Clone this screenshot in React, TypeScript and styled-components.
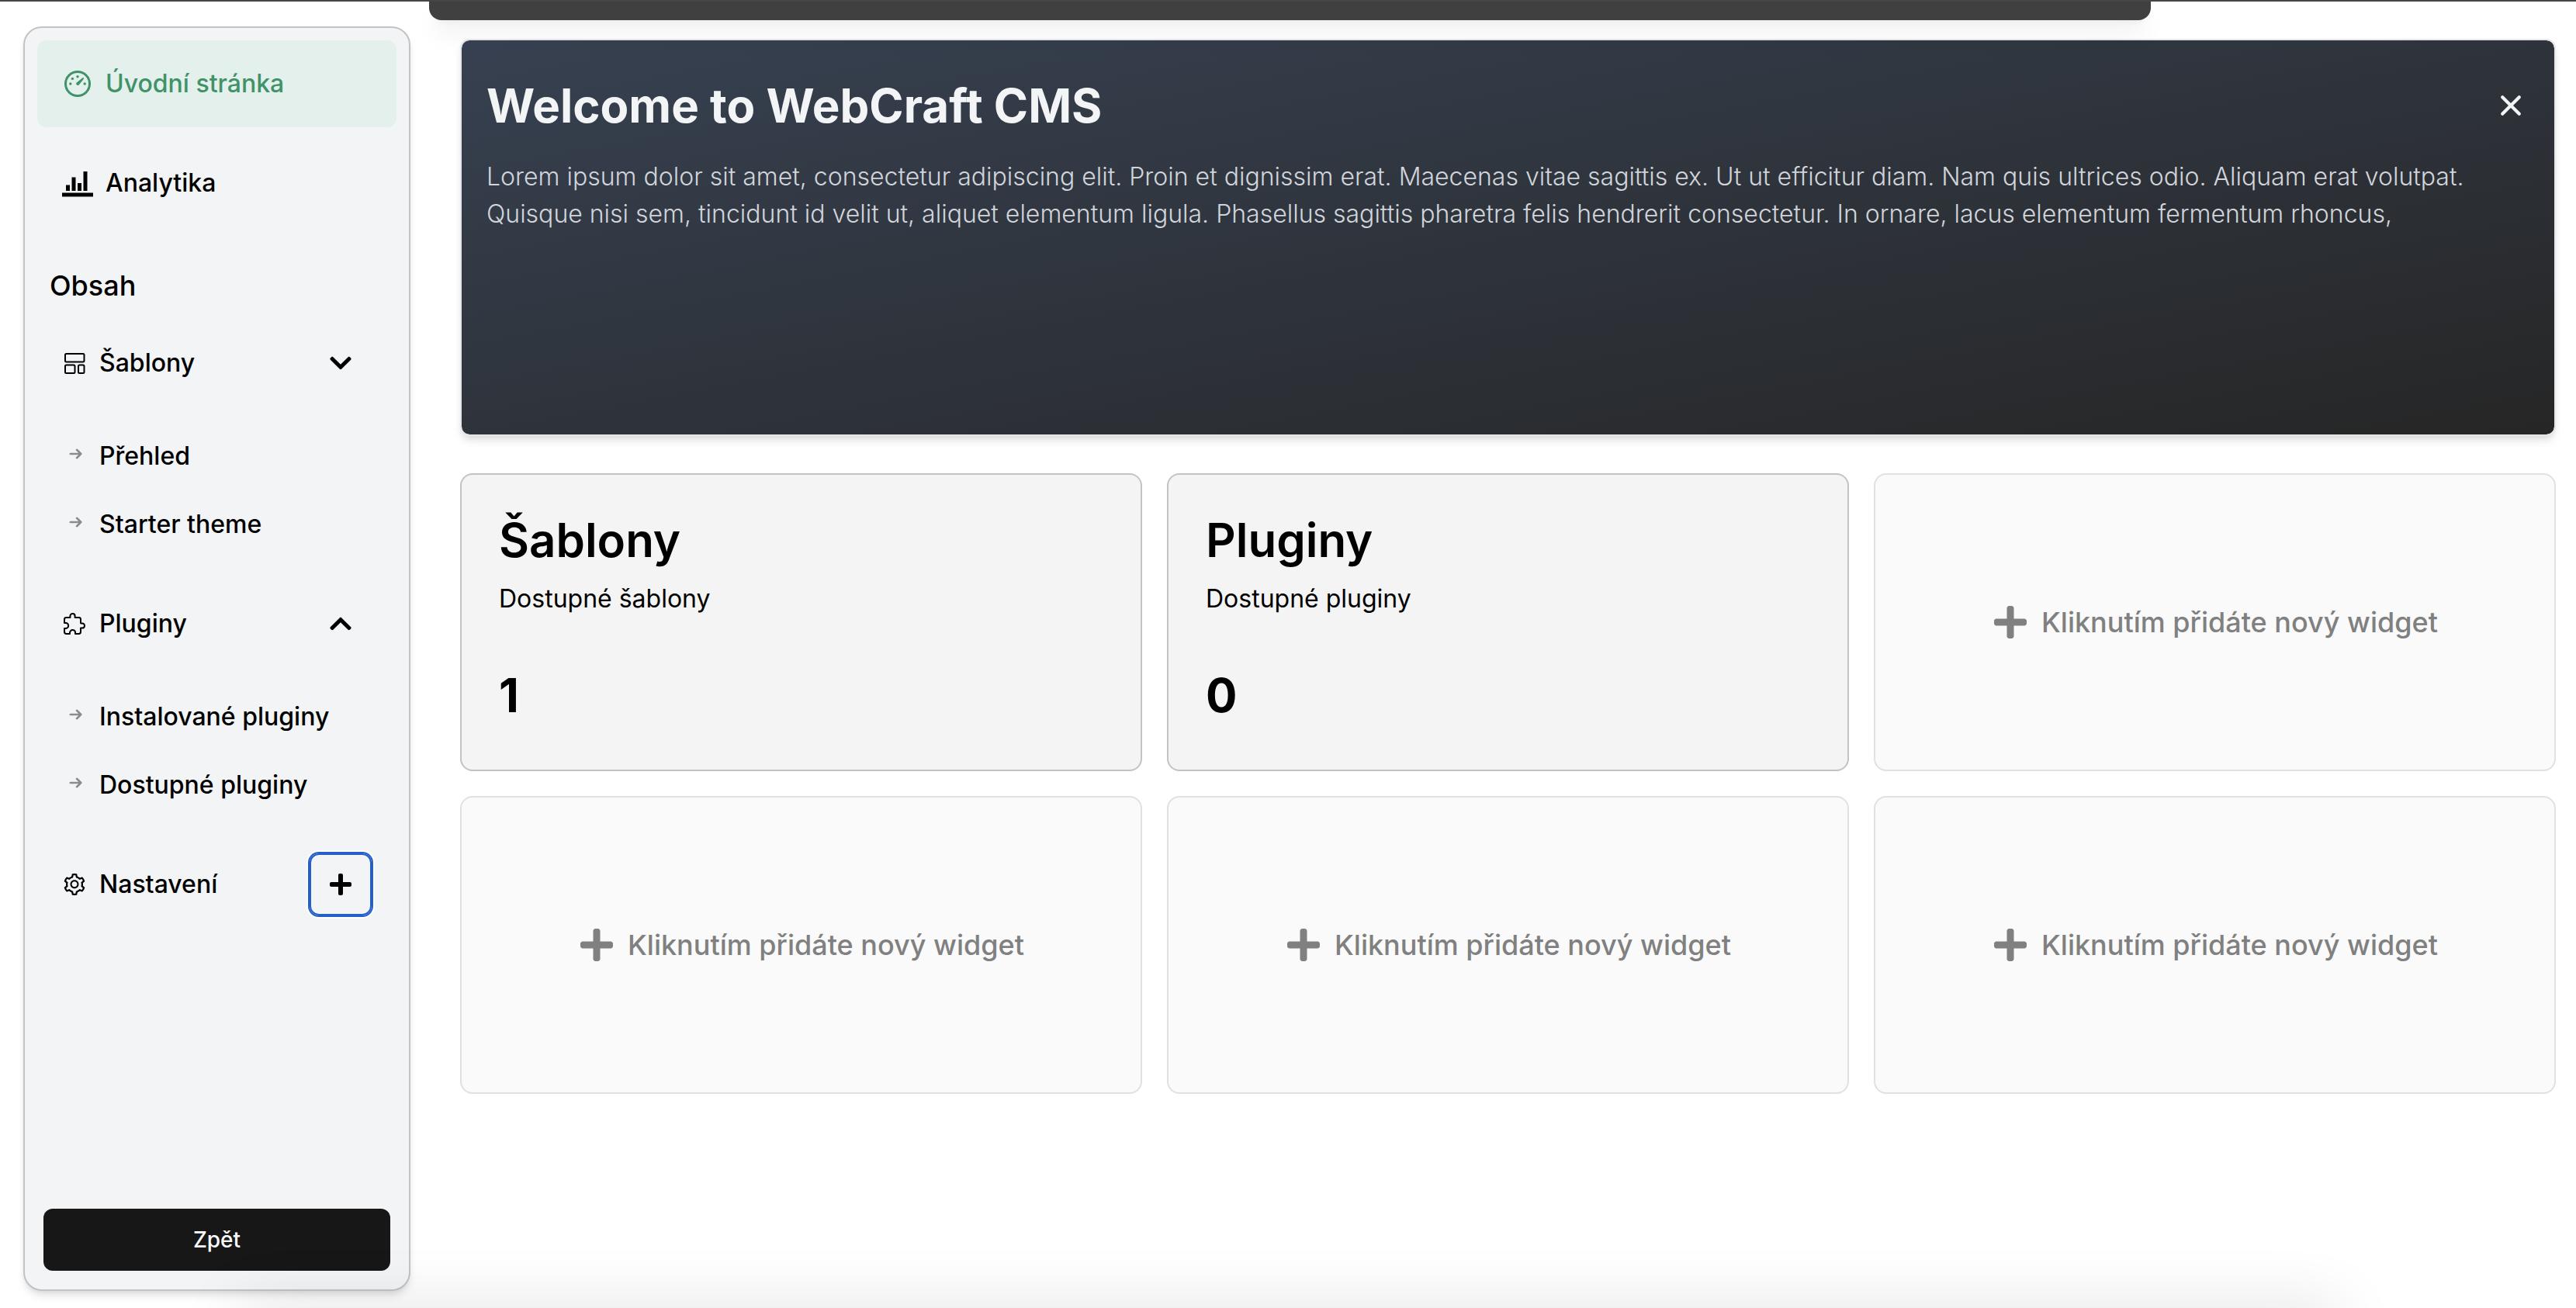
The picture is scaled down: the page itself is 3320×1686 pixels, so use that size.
import React from 'react';
import styled, { createGlobalStyle } from 'styled-components';
import { AiOutlineSetting } from 'react-icons/ai';
import { ImStatsBars } from 'react-icons/im';
import { FaChevronDown, FaChevronUp, FaPlus } from 'react-icons/fa';
import { IoExtensionPuzzleOutline } from 'react-icons/io5';

const GlobalStyle = createGlobalStyle`
  *, *::before, *::after { box-sizing: border-box; }
  body { margin: 0; background: #fff; color: #000; font-family: Inter, "Liberation Sans", sans-serif; font-size: 32px; line-height: 48px; }
  h1, h2, h3, p, ul { margin: 0; padding: 0; }
  ul { list-style: none; }
  a { color: inherit; text-decoration: none; }
  button { font: inherit; color: inherit; background: none; border: 0; padding: 0; cursor: pointer; }
  svg { display: block; flex: none; }
`;

const Page = styled.div`
  position: relative;
  display: flex;
  min-height: 100vh;
  overflow: hidden;
  border-top: 2px solid #464646;
`;

const TopPanel = styled.div`
  position: absolute;
  top: 0;
  left: 553px;
  right: 548px;
  height: 24px;
  border-radius: 0 0 16px 16px;
  background: #404040;
  box-shadow: 0 20px 30px -6px rgba(0, 0, 0, 0.1), 0 8px 12px -8px rgba(0, 0, 0, 0.1);
`;

const BottomShade = styled.div`
  position: absolute;
  top: 100%;
  left: 308px;
  right: 308px;
  height: 40px;
  box-shadow: 0 0 80px 0 rgba(0, 0, 0, 0.15);
`;

const Sidebar = styled.aside`
  display: flex;
  flex-direction: column;
  flex: none;
  width: 499px;
  margin: 32px 64px 22px 30px;
  padding: 16px;
  border: 2px solid #c1c3c5;
  border-radius: 24px;
  background: #f3f4f6;
  box-shadow: 0 8px 12px -2px rgba(0, 0, 0, 0.1), 0 4px 8px -4px rgba(0, 0, 0, 0.1);
  font-weight: 500;
`;

const MainNav = styled.nav`
  display: flex;
  flex-direction: column;
  gap: 16px;
`;

const MainLink = styled.a<{ $active?: boolean }>`
  display: flex;
  align-items: center;
  gap: 16px;
  padding: 32px;
  border-radius: 12px;
  background: ${(p) => (p.$active ? '#e4f0ec' : 'transparent')};
  color: ${(p) => (p.$active ? '#409268' : '#000')};
`;

const SectionTitle = styled.h2`
  padding: 52px 16px 20px;
  font-size: 36px;
  line-height: 48px;
  font-weight: 500;
`;

const Group = styled.section`
  padding: 0 32px;
  margin-bottom: 8px;
`;

const GroupHead = styled.div`
  display: flex;
  align-items: center;
  gap: 16px;
  height: 112px;
`;

const GroupLink = styled.a`
  flex: 1;
`;

const ToggleButton = styled.button<{ $focused?: boolean }>`
  display: flex;
  align-items: center;
  justify-content: center;
  width: 80px;
  height: 80px;
  border-radius: 12px;
  box-shadow: ${(p) => (p.$focused ? 'inset 0 0 0 2px #265fc9, 0 0 0 2px #265fc9, 0 0 0 4px #fff' : 'none')};
`;

const SubList = styled.ul`
  display: flex;
  flex-direction: column;
  padding: 20px 0;
`;

const SubLink = styled.a`
  display: flex;
  align-items: center;
  gap: 16px;
  height: 88px;
  svg { color: #8c8c8c; margin-bottom: 6px; }
`;

const BackButton = styled.button`
  margin: auto 8px 8px;
  height: 80px;
  border-radius: 12px;
  background: #171717;
  color: #fafafa;
  font-size: 28px;
  font-weight: 500;
`;

const Main = styled.main`
  flex: 1;
  min-width: 0;
  display: flex;
  flex-direction: column;
  gap: 48px;
  padding: 48px 26px 48px 0;
`;

const Banner = styled.section`
  min-height: 512px;
  padding: 48px 32px;
  border: 2px solid #e5e7eb;
  border-radius: 12px;
  background: linear-gradient(to bottom right, #374151, #262626) padding-box;
  box-shadow: 0 8px 12px -2px rgba(0, 0, 0, 0.1), 0 4px 8px -4px rgba(0, 0, 0, 0.1);
`;

const BannerHead = styled.div`
  display: flex;
  align-items: center;
  justify-content: space-between;
  color: #f3f4f6;
`;

const BannerTitle = styled.h1`
  font-size: 60px;
  line-height: 72px;
  font-weight: 700;
`;

const CloseButton = styled.button`
  padding: 8px;
`;

const BannerText = styled.p`
  padding-top: 32px;
  color: #d1d5db;
  font-weight: 300;
`;

const WidgetGrid = styled.div`
  display: grid;
  grid-template-columns: repeat(3, minmax(0, 1fr));
  grid-auto-rows: 384px;
  gap: 32px;
`;

const StatCard = styled.article`
  padding: 48px;
  border: 2px solid #c3c3c3;
  border-radius: 16px;
  background: #f4f4f4;
`;

const StatTitle = styled.h3`
  padding-bottom: 16px;
  font-size: 60px;
  line-height: 72px;
  font-weight: 600;
`;

const StatValue = styled.p`
  padding-top: 64px;
  font-size: 60px;
  line-height: 72px;
  font-weight: 700;
`;

const AddWidget = styled.button`
  && {
    display: flex;
    align-items: center;
    justify-content: center;
    gap: 16px;
    border: 2px solid #e1e1e1;
    border-radius: 16px;
    background: #fafafa;
    color: #808080;
    font-size: 36px;
    font-weight: 500;
  }
`;

const GaugeIcon = () => (
  <svg width="40" height="40" viewBox="0 0 40 40" fill="currentColor" aria-hidden="true">
    <circle cx="20" cy="20" r="15.5" fill="none" stroke="currentColor" strokeWidth="3" />
    <circle cx="10.8" cy="20" r="1.7" />
    <circle cx="13.4" cy="13.4" r="1.7" />
    <circle cx="20" cy="10.8" r="1.7" />
    <circle cx="29.2" cy="20" r="1.7" />
    <path d="M26.2 12.4 18.4 18.7a2.2 2.2 0 0 0 3 3L27.8 13.9a1.1 1.1 0 0 0-1.6-1.5z" />
  </svg>
);

const TemplateIcon = () => (
  <svg width="32" height="32" viewBox="0 0 32 32" fill="none" stroke="currentColor" strokeWidth="2" aria-hidden="true">
    <rect x="4" y="4" width="24.5" height="10.5" rx="1.5" />
    <rect x="4" y="18.5" width="12.5" height="10.5" rx="1.5" />
    <rect x="21" y="18.5" width="7.5" height="10.5" rx="1.5" />
  </svg>
);

const ArrowIcon = () => (
  <svg width="32" height="32" viewBox="0 0 32 32" fill="none" stroke="currentColor" strokeWidth="2.6" strokeLinecap="round" strokeLinejoin="round" aria-hidden="true">
    <path d="M10.8 16H24M19 10.8 24.3 16 19 21.2" />
  </svg>
);

const CloseIcon = () => (
  <svg width="32" height="32" viewBox="0 0 32 32" fill="none" stroke="currentColor" strokeWidth="4.2" strokeLinecap="round" aria-hidden="true">
    <path d="M5.2 5.2 26.8 26.8M26.8 5.2 5.2 26.8" />
  </svg>
);

const groups = [
  { label: 'Šablony', icon: <TemplateIcon />, toggle: <FaChevronDown size={32} />, items: ['Přehled', 'Starter theme'] },
  { label: 'Pluginy', icon: <IoExtensionPuzzleOutline size={32} />, toggle: <FaChevronUp size={32} />, items: ['Instalované pluginy', 'Dostupné pluginy'] },
  { label: 'Nastavení', icon: <AiOutlineSetting size={32} />, toggle: <FaPlus size={32} />, items: [], focused: true },
];

const stats = [
  { title: 'Šablony', text: 'Dostupné šablony', value: 1 },
  { title: 'Pluginy', text: 'Dostupné pluginy', value: 0 },
];

export default function App() {
  return (
    <Page>
      <GlobalStyle />
      <Sidebar>
        <MainNav>
          <MainLink href="#uvod" $active><GaugeIcon />Úvodní stránka</MainLink>
          <MainLink href="#analytika"><ImStatsBars size={40} />Analytika</MainLink>
        </MainNav>
        <SectionTitle>Obsah</SectionTitle>
        {groups.map((g) => (
          <Group key={g.label}>
            <GroupHead>
              {g.icon}
              <GroupLink href="#sekce">{g.label}</GroupLink>
              <ToggleButton type="button" aria-label={g.label} $focused={g.focused}>{g.toggle}</ToggleButton>
            </GroupHead>
            {g.items.length > 0 && (
              <SubList>
                {g.items.map((item) => (
                  <li key={item}>
                    <SubLink href="#polozka"><ArrowIcon />{item}</SubLink>
                  </li>
                ))}
              </SubList>
            )}
          </Group>
        ))}
        <BackButton type="button">Zpět</BackButton>
      </Sidebar>
      <TopPanel />
      <Main>
        <Banner>
          <BannerHead>
            <BannerTitle>Welcome to WebCraft CMS</BannerTitle>
            <CloseButton type="button" aria-label="Zavřít"><CloseIcon /></CloseButton>
          </BannerHead>
          <BannerText>
            Lorem ipsum dolor sit amet, consectetur adipiscing elit. Proin et dignissim erat. Maecenas vitae sagittis ex. Ut ut efficitur diam. Nam quis ultrices odio. Aliquam erat volutpat. Quisque nisi sem, tincidunt id velit ut, aliquet elementum ligula. Phasellus sagittis pharetra felis hendrerit consectetur. In ornare, lacus elementum fermentum rhoncus,
          </BannerText>
        </Banner>
        <WidgetGrid>
          {stats.map((s) => (
            <StatCard key={s.title}>
              <StatTitle>{s.title}</StatTitle>
              <p>{s.text}</p>
              <StatValue>{s.value}</StatValue>
            </StatCard>
          ))}
          {[1, 2, 3, 4].map((n) => (
            <AddWidget key={n} type="button"><FaPlus size={48} />Kliknutím přidáte nový widget</AddWidget>
          ))}
        </WidgetGrid>
      </Main>
      <BottomShade />
    </Page>
  );
}
